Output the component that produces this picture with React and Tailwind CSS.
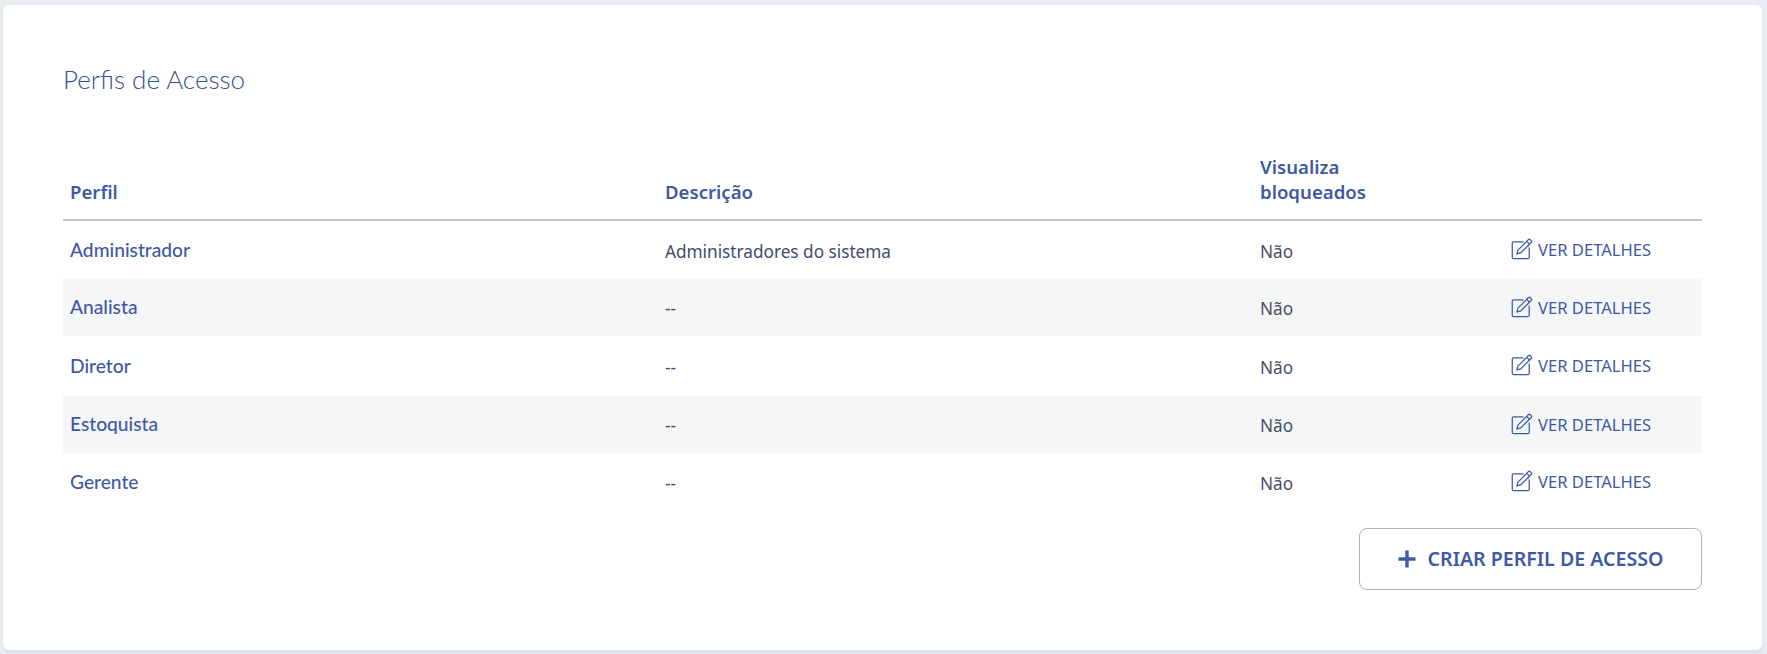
import React from 'react';

const perfis = [
  { nome: 'Administrador', descricao: 'Administradores do sistema', altura: 'h-[59px]' },
  { nome: 'Analista', descricao: '--', altura: 'h-[57px]' },
  { nome: 'Diretor', descricao: '--', altura: 'h-[60px]' },
  { nome: 'Estoquista', descricao: '--', altura: 'h-[57px]' },
  { nome: 'Gerente', descricao: '--', altura: 'h-[58px]' },
];

function EditIcon() {
  return (
    <svg width="22" height="22" viewBox="0 0 21 21" fill="none" stroke="#3f59a5" strokeWidth="1.2" className="shrink-0 -translate-y-[1px]">
      <path d="M12 3.6H2.6a1.4 1.4 0 0 0-1.4 1.4v13.4a1.4 1.4 0 0 0 1.4 1.4H16a1.4 1.4 0 0 0 1.4-1.4V9" />
      <path d="M6.6 11.6 16.6 1.6a1.3 1.3 0 0 1 1.8 0l.9.9a1.3 1.3 0 0 1 0 1.8L9.3 14.3l-3.6.9.9-3.6Z" />
      <path d="m15 3.2 2.7 2.7" />
    </svg>
  );
}

export default function App() {
  return (
    <div className="h-[654px] bg-[#e9ebf3] pl-[3px] pr-[5px] pt-[5px] pb-[4px] font-['Noto_Sans',sans-serif]">
      <div className="h-full rounded-[6px] bg-white pl-[60px] pr-[60px] pt-[60px] shadow-[0_4px_0_#e0e2ec]">
        <h1 className="font-['Lato',sans-serif] text-[26px] leading-[28px] font-light text-[#34508f]">Perfis de Acesso</h1>

        <table className="mt-[36px] w-full table-fixed border-collapse">
          <thead>
            <tr className="h-[91px] border-b-2 border-[#c0c3d6] text-left text-[18.6px] leading-[25px] font-semibold text-[#3f59a5]">
              <th className="w-[595px] px-[7px] pb-[15px] align-bottom font-semibold">Perfil</th>
              <th className="w-[595px] px-[7px] pb-[15px] align-bottom font-semibold">Descrição</th>
              <th className="w-[258px] px-[7px] pb-[15px] align-bottom font-semibold">Visualiza<br />bloqueados</th>
              <th></th>
            </tr>
          </thead>
          <tbody>
            {perfis.map((p) => (
              <tr key={p.nome} className={`${p.altura} even:bg-[#f5f6f8]`}>
                <td className="px-[7px] font-['Lato',sans-serif] text-[19.2px] font-medium text-[#3f59a5]">{p.nome}</td>
                <td className="px-[7px] pt-[3px] text-[17.2px] text-[#414a72]">{p.descricao}</td>
                <td className="px-[7px] pt-[3px] text-[17.2px] text-[#4a4f66]">Não</td>
                <td className="pt-[1px]">
                  <a className="flex items-center gap-[5px] text-[16.6px] text-[#3f59a5]">
                    <EditIcon />
                    VER DETALHES
                  </a>
                </td>
              </tr>
            ))}
          </tbody>
        </table>

        <div className="mt-[17px] flex justify-end">
          <button className="flex h-[62px] w-[343px] items-center justify-center gap-[12px] rounded-[8px] border border-[#aab0c8] text-[19.6px] font-semibold text-[#3f59a5]">
            <svg width="18" height="18" viewBox="0 0 18 18" fill="none" stroke="#3f59a5" strokeWidth="3.4">
              <path d="M9 0.5v17M0.5 9h17" />
            </svg>
            CRIAR PERFIL DE ACESSO
          </button>
        </div>
      </div>
    </div>
  );
}
